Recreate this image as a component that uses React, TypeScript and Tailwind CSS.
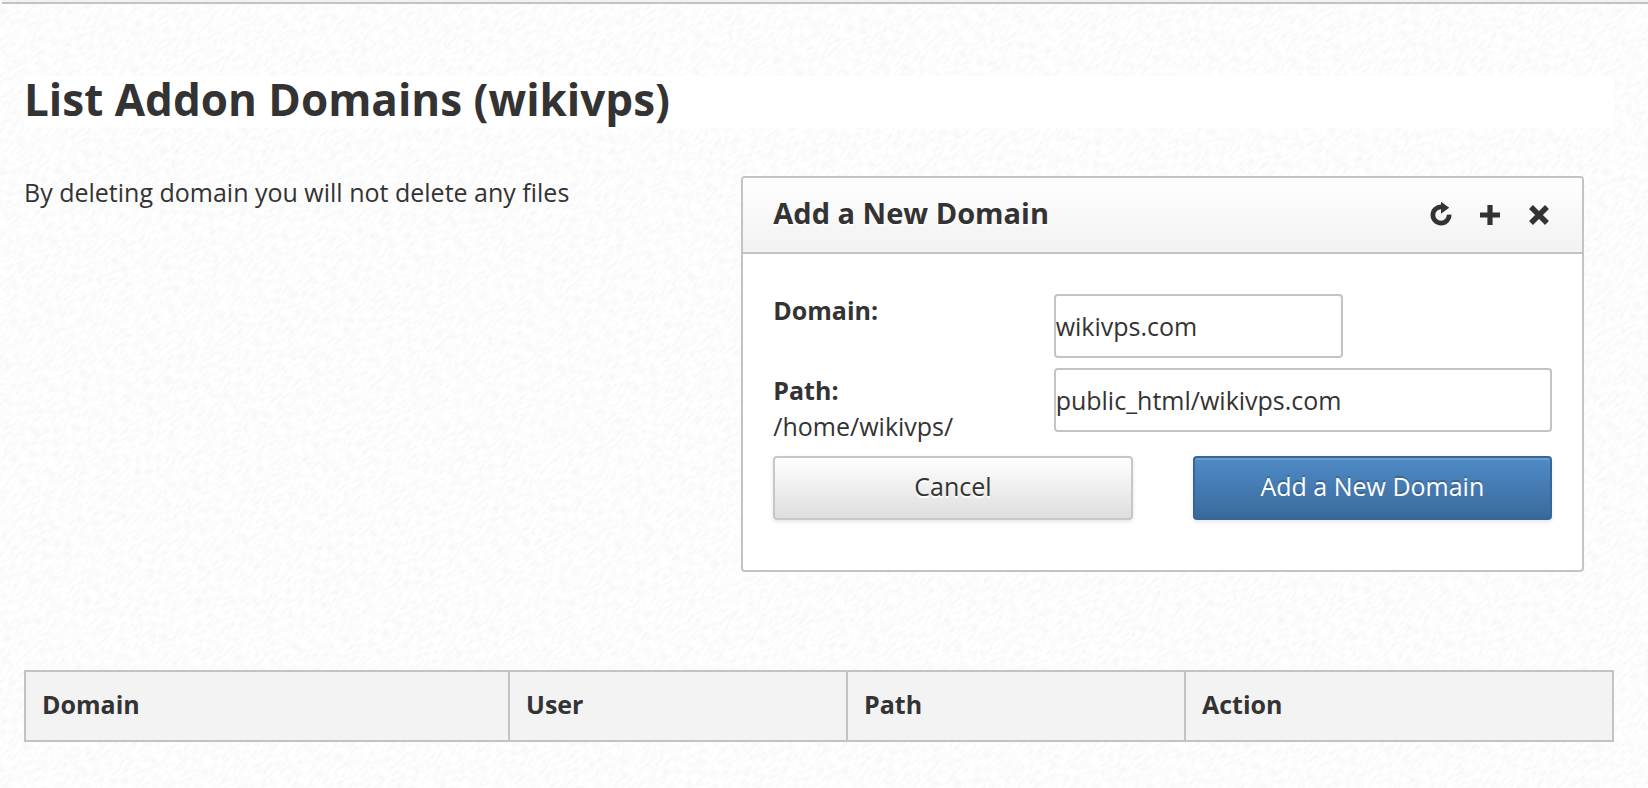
import React from "react";

const columns = [
  { label: "Domain", width: "w-[484px]" },
  { label: "User", width: "w-[338px]" },
  { label: "Path", width: "w-[338px]" },
  { label: "Action", width: "" },
];

function PaperTexture() {
  return (
    <svg aria-hidden="true" className="pointer-events-none absolute inset-0 -z-10 h-full w-full">
      <filter id="grain" x="0" y="0" width="100%" height="100%">
        <feTurbulence type="fractalNoise" baseFrequency="0.12 0.34" numOctaves="2" seed="4" />
        <feColorMatrix values="0 0 0 0 0  0 0 0 0 0  0 0 0 0 0  0.07 0 0 0 -0.024" />
      </filter>
      <g transform="rotate(-42)">
        <rect x="-1400" y="-100" width="3600" height="2600" filter="url(#grain)" />
      </g>
    </svg>
  );
}

function PanelIcon({ label, children }: { label: string; children: React.ReactNode }) {
  return (
    <button type="button" aria-label={label} className="text-[#333333]">
      <svg viewBox="0 0 24 28" className="h-7 w-6" fill="none" stroke="currentColor">
        {children}
      </svg>
    </button>
  );
}

function AddDomainPanel() {
  const field =
    "h-16 rounded-[4px] border-2 border-[#c3c3c3] bg-white p-0 text-[#333333] outline-none";
  const button = "h-16 rounded-[4px] border-2 pb-1";
  return (
    <section className="mr-[30px] w-[53%] rounded-[4px] border-2 border-[#c3c3c3] bg-white">
      <header className="flex h-[76px] items-center justify-between rounded-t-[2px] border-b-2 border-[#c3c3c3] bg-linear-to-b from-white to-[#f2f2f2] pr-[31px] pl-[30px]">
        <h2 className="pb-1 text-[29px] leading-10 font-bold [text-shadow:0_2px_0_#fff]">
          Add a New Domain
        </h2>
        <div className="flex gap-[25px]">
          <PanelIcon label="Refresh">
            <path d="M20.1 13.7A8.1 8.1 0 1 1 12.5 5.9" strokeWidth="4.7" />
            <path d="M12 0.7L20.2 6.8L12 12.8Z" fill="currentColor" stroke="none" />
          </PanelIcon>
          <PanelIcon label="Expand">
            <path d="M12 4V24M2 14H22" strokeWidth="5.2" />
          </PanelIcon>
          <PanelIcon label="Close">
            <path d="M4 6L20 22M20 6L4 22" strokeWidth="5.4" />
          </PanelIcon>
        </div>
      </header>
      <form className="px-[30px] pt-10 pb-[50px]" onSubmit={(e) => e.preventDefault()}>
        <div className="flex items-start">
          <label htmlFor="domain" className="w-[36%] leading-8 font-bold">
            Domain:
          </label>
          <div className="flex-1">
            <input id="domain" defaultValue="wikivps.com" className={`${field} w-[58%]`} />
          </div>
        </div>
        <div className="mt-[10px] flex items-start">
          <label htmlFor="path" className="w-[36%] pt-1">
            <b className="block">Path:</b>
            /home/wikivps/
          </label>
          <div className="flex-1">
            <input id="path" defaultValue="public_html/wikivps.com" className={`${field} w-full`} />
          </div>
        </div>
        <div className="mt-3 grid grid-cols-2 gap-[60px]">
          <button
            type="button"
            className={`${button} border-[#c7c7c7] bg-linear-to-b from-white to-[#dedede] shadow-[0_2px_4px_rgba(0,0,0,0.1)] [text-shadow:0_2px_0_#fff]`}
          >
            Cancel
          </button>
          <button
            type="submit"
            className={`${button} border-[#37669a] bg-linear-to-b from-[#4f8bc7] to-[#3a6a9c] text-white shadow-[inset_0_2px_0_rgba(255,255,255,0.15),0_2px_4px_rgba(0,0,0,0.1)] [text-shadow:0_-2px_0_rgba(0,0,0,0.2)]`}
          >
            Add a New Domain
          </button>
        </div>
      </form>
    </section>
  );
}

export default function App() {
  return (
    <div className="relative isolate min-h-screen overflow-hidden bg-white font-['Open_Sans','Noto_Sans',sans-serif] text-[25px] leading-9 text-[#333333]">
      <PaperTexture />
      <div className="ml-[2px] h-1 border-b-2 border-[#c3c3c3] bg-[#f2f2f2]" />
      <main className="pt-[72px] pr-[34px] pb-10 pl-6">
        <h1 className="h-[52px] rounded-[4px] bg-white text-[44px] leading-[46px] font-bold">
          List Addon Domains (wikivps)
        </h1>
        <div className="mt-12 flex items-start">
          <p className="flex-1 leading-8">By deleting domain you will not delete any files</p>
          <AddDomainPanel />
        </div>
        <table className="mt-[98px] w-full table-fixed border-collapse bg-[#f3f3f3] text-left">
          <thead>
            <tr>
              {columns.map((c) => (
                <th
                  key={c.label}
                  scope="col"
                  className={`border-2 border-[#c3c3c3] px-4 pt-[14px] pb-[18px] font-bold ${c.width}`}
                >
                  {c.label}
                </th>
              ))}
            </tr>
          </thead>
        </table>
      </main>
    </div>
  );
}
